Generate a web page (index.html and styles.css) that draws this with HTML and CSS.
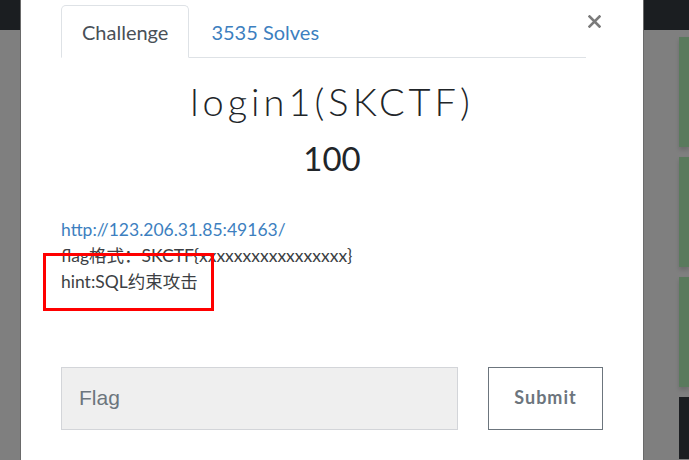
FILE: index.html
```html
<!DOCTYPE html>
<html lang="zh">
<head>
<meta charset="utf-8">
<title>login1(SKCTF)</title>
<link rel="stylesheet" href="styles.css">
</head>
<body>
<div class="page">
  <div class="topbar"></div>
  <div class="backdrop">
    <div class="cards">
      <div class="card"></div>
      <div class="card"></div>
      <div class="card"></div>
      <div class="card dark"></div>
    </div>
  </div>

  <div class="modal">
    <div class="modal-header">
      <ul class="tabs">
        <li class="tab active"><a>Challenge</a></li>
        <li class="tab"><a class="link">3535 Solves</a></li>
      </ul>
      <button class="close" aria-label="Close">
        <svg width="13" height="13" viewBox="0 0 13 13"><path d="M1.5 1.5 L11.5 11.5 M11.5 1.5 L1.5 11.5" stroke="#7b7b7b" stroke-width="2.6" stroke-linecap="square"/></svg>
      </button>
    </div>
    <div class="modal-body">
      <h2 class="title">login1(SKCTF)</h2>
      <h3 class="points">100</h3>
      <div class="desc">
        <a class="url">http://123.206.31.85:49163/</a>
        <div>flag格式：SKCTF{xxxxxxxxxxxxxxxxx}</div>
        <div>hint:SQL约束攻击</div>
      </div>
      <div class="submit-row">
        <input class="flag-input" type="text" placeholder="Flag">
        <button class="submit">Submit</button>
      </div>
    </div>
    <div class="annotation"></div>
  </div>
</div>
</body>
</html>
```

FILE: styles.css
```css
html, body {
  margin: 0;
  padding: 0;
}
body {
  width: 689px;
  height: 460px;
  overflow: hidden;
  background: #7f7f7f;
  font-family: Lato, "Noto Sans CJK SC", sans-serif;
}
.page {
  position: relative;
  width: 689px;
  height: 460px;
}
.topbar {
  height: 30px;
  background: #1b1e21;
}
.backdrop {
  display: flex;
  justify-content: flex-end;
  height: 430px;
}
.cards {
  width: 10px;
  padding-top: 7px;
  display: flex;
  flex-direction: column;
  gap: 10px;
}
.card {
  height: 110px;
  background: #5a7a5d;
  box-shadow: 0 3px 4px rgba(0,0,0,0.15);
}
.card.dark {
  height: 62px;
  background: #1b1e21;
  box-shadow: none;
}

.modal {
  position: absolute;
  left: 20px;
  top: 0;
  width: 622px;
  height: 460px;
  background: #fff;
  border-left: 1px solid #6a6a6a;
  border-right: 1px solid #6a6a6a;
}
.modal-header {
  display: flex;
  align-items: flex-start;
  padding: 5px 42px 0 40px;
}
.tabs {
  flex: 1;
  display: flex;
  margin: 0;
  padding: 0;
  list-style: none;
  border-bottom: 1px solid #dee2e6;
}
.tab {
  margin-bottom: -1px;
}
.tab a {
  display: block;
  height: 51px;
  line-height: 52px;
  padding: 0 20px;
  font-size: 20px;
  color: #495057;
  border: 1px solid transparent;
  border-top-left-radius: 5px;
  border-top-right-radius: 5px;
}
.tab.active a {
  border-color: #dee2e6 #dee2e6 #fff;
  background: #fff;
}
.tab a.link {
  color: #3d7fc0;
  padding-left: 21px;
}
.close {
  margin: 10px 0 0 2px;
  padding: 0;
  width: 13px;
  height: 13px;
  border: 0;
  background: none;
  display: flex;
}

.modal-body {
  padding: 0 40px;
}
.title {
  margin: 20px 0 0;
  text-align: center;
  font-family: Lato, sans-serif;
  font-weight: 300;
  font-size: 38px;
  letter-spacing: 4px;
  line-height: 46px;
  color: #212529;
}
.points {
  margin: 14px 0 0;
  text-align: center;
  font-family: Lato, sans-serif;
  font-weight: 400;
  font-size: 33px;
  line-height: 40px;
  color: #212529;
}
.desc {
  margin-top: 39px;
  font-size: 17.5px;
  line-height: 26px;
  color: #3c3f44;
}
.url {
  display: block;
  color: #3d7fc0;
}
.submit-row {
  display: flex;
  gap: 30px;
  margin-top: 72px;
}
.flag-input {
  width: 397px;
  height: 63px;
  box-sizing: border-box;
  margin: 0;
  padding: 0 17px 2px;
  border: 1px solid #d3d5d9;
  background: #efefef;
  font-family: "Liberation Sans", Arial, sans-serif;
  font-size: 21px;
  color: #6c757d;
  outline: none;
}
.flag-input::placeholder {
  color: #6c757d;
}
.submit {
  width: 115px;
  height: 63px;
  box-sizing: border-box;
  margin: 0;
  padding: 0 0 4px;
  border: 1px solid #6c757d;
  background: #fff;
  font-family: Lato, sans-serif;
  font-weight: 700;
  font-size: 18px;
  letter-spacing: 1px;
  color: #6c757d;
}
.annotation {
  position: absolute;
  left: 22px;
  top: 253px;
  width: 165px;
  height: 52px;
  border: 3px solid #ff0000;
}
```
